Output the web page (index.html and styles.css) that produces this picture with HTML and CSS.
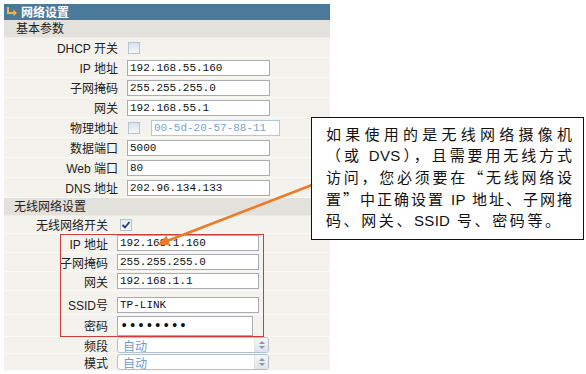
FILE: index.html
```html
<!DOCTYPE html>
<html lang="zh-CN">
<head>
  <meta charset="UTF-8">
  <meta name="viewport" content="width=device-width, initial-scale=1.0">
  <title>网络设置</title>
  <link rel="stylesheet" href="styles.css">
</head>
<body>
  <div class="panel">
    <div class="panel-title">
      <svg class="title-icon" width="12" height="10" viewBox="0 0 12 10">
        <path d="M2 1 V7 H8" fill="none" stroke="#f6b53a" stroke-width="2"/>
        <path d="M7.5 3.5 L11 7 L7.5 10 Z" fill="#f6b53a"/>
      </svg>
      网络设置
    </div>

    <!-- 基本参数 -->
    <div class="section">基本参数</div>
    <div class="row"><span class="label">DHCP 开关</span><span class="check"></span></div>
    <div class="row"><span class="label">IP 地址</span><input class="field" value="192.168.55.160"></div>
    <div class="row"><span class="label">子网掩码</span><input class="field" value="255.255.255.0"></div>
    <div class="row"><span class="label">网关</span><input class="field" value="192.168.55.1"></div>
    <div class="row"><span class="label">物理地址</span><span class="check check-mac"></span><input class="field field-mac" value="00-5d-20-57-88-11" disabled></div>
    <div class="row"><span class="label">数据端口</span><input class="field" value="5000"></div>
    <div class="row"><span class="label">Web 端口</span><input class="field" value="80"></div>
    <div class="row"><span class="label">DNS 地址</span><input class="field" value="202.96.134.133"></div>

    <!-- 无线网络设置 -->
    <div class="section section-wl">无线网络设置</div>
    <div class="row wl row-switch">
      <span class="label">无线网络开关</span>
      <span class="check checked">
        <svg width="10" height="10" viewBox="0 0 10 10"><path d="M1.5 5 L4 7.5 L8.5 2" fill="none" stroke="#1d3f7a" stroke-width="1.8"/></svg>
      </span>
    </div>
    <div class="row wl row-ip"><span class="label">IP 地址</span><input class="field" value="192.168.1.160"></div>
    <div class="row wl row-ip"><span class="label">子网掩码</span><input class="field" value="255.255.255.0"></div>
    <div class="row wl row-ip"><span class="label">网关</span><input class="field" value="192.168.1.1"></div>
    <div class="row wl row-gap"></div>
    <div class="row wl row-ssid"><span class="label">SSID号</span><input class="field" value="TP-LINK"></div>
    <div class="row wl row-pass"><span class="label">密码</span><input class="field field-pass" type="password" value="12345678"></div>
    <div class="row wl row-sel"><span class="label">频段</span><div class="select"><span>自动</span><span class="spin"><i class="up"></i><i class="down"></i></span></div></div>
    <div class="row wl row-sel"><span class="label">模式</span><div class="select"><span>自动</span><span class="spin"><i class="up"></i><i class="down"></i></span></div></div>
  </div>

  <div class="highlight"></div>

  <svg class="pointer" width="586" height="374" viewBox="0 0 586 374">
    <line x1="312" y1="185" x2="167" y2="241" stroke="#ee7a26" stroke-width="2.5"/>
    <polygon points="157,245 170,245 166.6,235.8" fill="#ee7a26"/>
  </svg>

  <div class="callout">
    <span class="line">如果使用的是无线网络摄像机</span>
    <span class="line">（或 <span class="latin">DVS</span>），且需要用无线方式</span>
    <span class="line">访问，您必须要在<span class="cjk">“</span>无线网络设</span>
    <span class="line">置<span class="cjk">”</span>中正确设置 <span class="latin">IP</span> 地址、子网掩</span>
    <span class="line last">码、网关、<span class="latin">SSID</span> 号、密码等。</span>
  </div>
</body>
</html>
```

FILE: styles.css
```css
body {
  margin: 0;
  background: #fff;
  font-family: "Liberation Sans", "Noto Sans CJK SC", sans-serif;
  font-size: 12px;
  color: #222;
  width: 586px;
  height: 374px;
  overflow: hidden;
  position: relative;
}

.panel {
  width: 326px;
  margin: 4px 0 0 4px;
  background: #f4f2ed;
}

.panel-title {
  height: 16px;
  background: #4b799a;
  color: #fff;
  font-weight: bold;
  font-family: "Noto Sans CJK SC", sans-serif;
  line-height: 16px;
  display: flex;
  align-items: center;
  gap: 3px;
  padding-left: 2px;
}

.title-icon {
  margin-top: -2px;
}

.section {
  height: 18px;
  line-height: 18px;
  background: #e3e1db;
  padding-left: 12px;
  border-bottom: 1px solid #ecebe6;
  box-sizing: border-box;
}

.section-wl {
  padding-left: 10px;
}

.row {
  display: flex;
  align-items: center;
  height: 20px;
  border-bottom: 1px solid #fbfaf7;
  box-sizing: border-box;
}

.label {
  width: 123px;
  padding-right: 9px;
  text-align: right;
  box-sizing: border-box;
  flex-shrink: 0;
  white-space: nowrap;
}

.wl .label {
  width: 113px;
}

.field {
  width: 143px;
  height: 16px;
  box-sizing: border-box;
  border: 1px solid #a9adb2;
  background: #fff;
  padding: 0 2px;
  margin: 0;
  font-family: "Liberation Mono", monospace;
  font-size: 11px;
  color: #111;
  outline: none;
}

.wl .field {
  width: 142px;
}

.field-mac {
  width: 129px;
  border-color: #b2c6da;
  color: #7ba3cd;
  background: #fff;
}

.wl .field-pass {
  width: 136px;
  height: 20px;
  font-size: 14px;
  letter-spacing: 0;
}

.check {
  width: 12px;
  height: 12px;
  margin-left: 1px;
  box-sizing: border-box;
  border: 1px solid #b7c3d3;
  background: linear-gradient(#d9e1ec, #f3f6fa);
  display: flex;
  align-items: center;
  justify-content: center;
}

.check-mac {
  margin-right: 11px;
}

.check.checked {
  margin-left: 3px;
  background: linear-gradient(#e4eaf2, #fafbfd);
}

.row-switch {
  height: 18px;
}

.row-ip {
  height: 19px;
}

.row-gap {
  height: 4px;
  border-bottom: none;
}

.row-ssid {
  height: 20px;
}

.row-pass {
  height: 22px;
}

.row-sel {
  height: 17px;
}

.select {
  width: 152px;
  height: 16px;
  box-sizing: border-box;
  border: 1px solid #b2bfcf;
  border-radius: 3px;
  background: #fff;
  display: flex;
  align-items: center;
  justify-content: space-between;
  padding-left: 5px;
  color: #6b9bd4;
  font-family: "Noto Sans CJK SC", sans-serif;
  font-size: 12px;
}

.spin {
  width: 13px;
  height: 14px;
  background: linear-gradient(#f4f6f9, #dfe4eb);
  border-left: 1px solid #e1e5ea;
  border-radius: 0 2px 2px 0;
  display: flex;
  flex-direction: column;
  align-items: center;
  justify-content: center;
  gap: 2px;
}

.spin i {
  width: 0;
  height: 0;
  border-left: 3px solid transparent;
  border-right: 3px solid transparent;
}

.spin .up {
  border-bottom: 3px solid #8c96a3;
}

.spin .down {
  border-top: 3px solid #8c96a3;
}

/* annotations laid over the screenshot */
.highlight {
  position: absolute;
  left: 60px;
  top: 234px;
  width: 204px;
  height: 103px;
  box-sizing: border-box;
  border: 1px solid #d23a3a;
  pointer-events: none;
}

.pointer {
  position: absolute;
  left: 0;
  top: 0;
  pointer-events: none;
}

.callout {
  position: absolute;
  left: 311px;
  top: 117px;
  width: 273px;
  height: 123px;
  box-sizing: border-box;
  border: 1px solid #111;
  background: #fff;
  padding: 6px 0 0 14px;
  font-size: 15px;
  line-height: 21px;
  color: #111;
}

.callout .line {
  display: block;
  width: 246px;
  white-space: nowrap;
  text-align: justify;
  text-align-last: justify;
  text-justify: inter-character;
}

.callout .line.last {
  text-align-last: left;
  letter-spacing: 2.6px;
}

.callout .latin {
  letter-spacing: 0.3px;
}

.cjk {
  font-family: "Noto Sans CJK SC", sans-serif;
}
```
